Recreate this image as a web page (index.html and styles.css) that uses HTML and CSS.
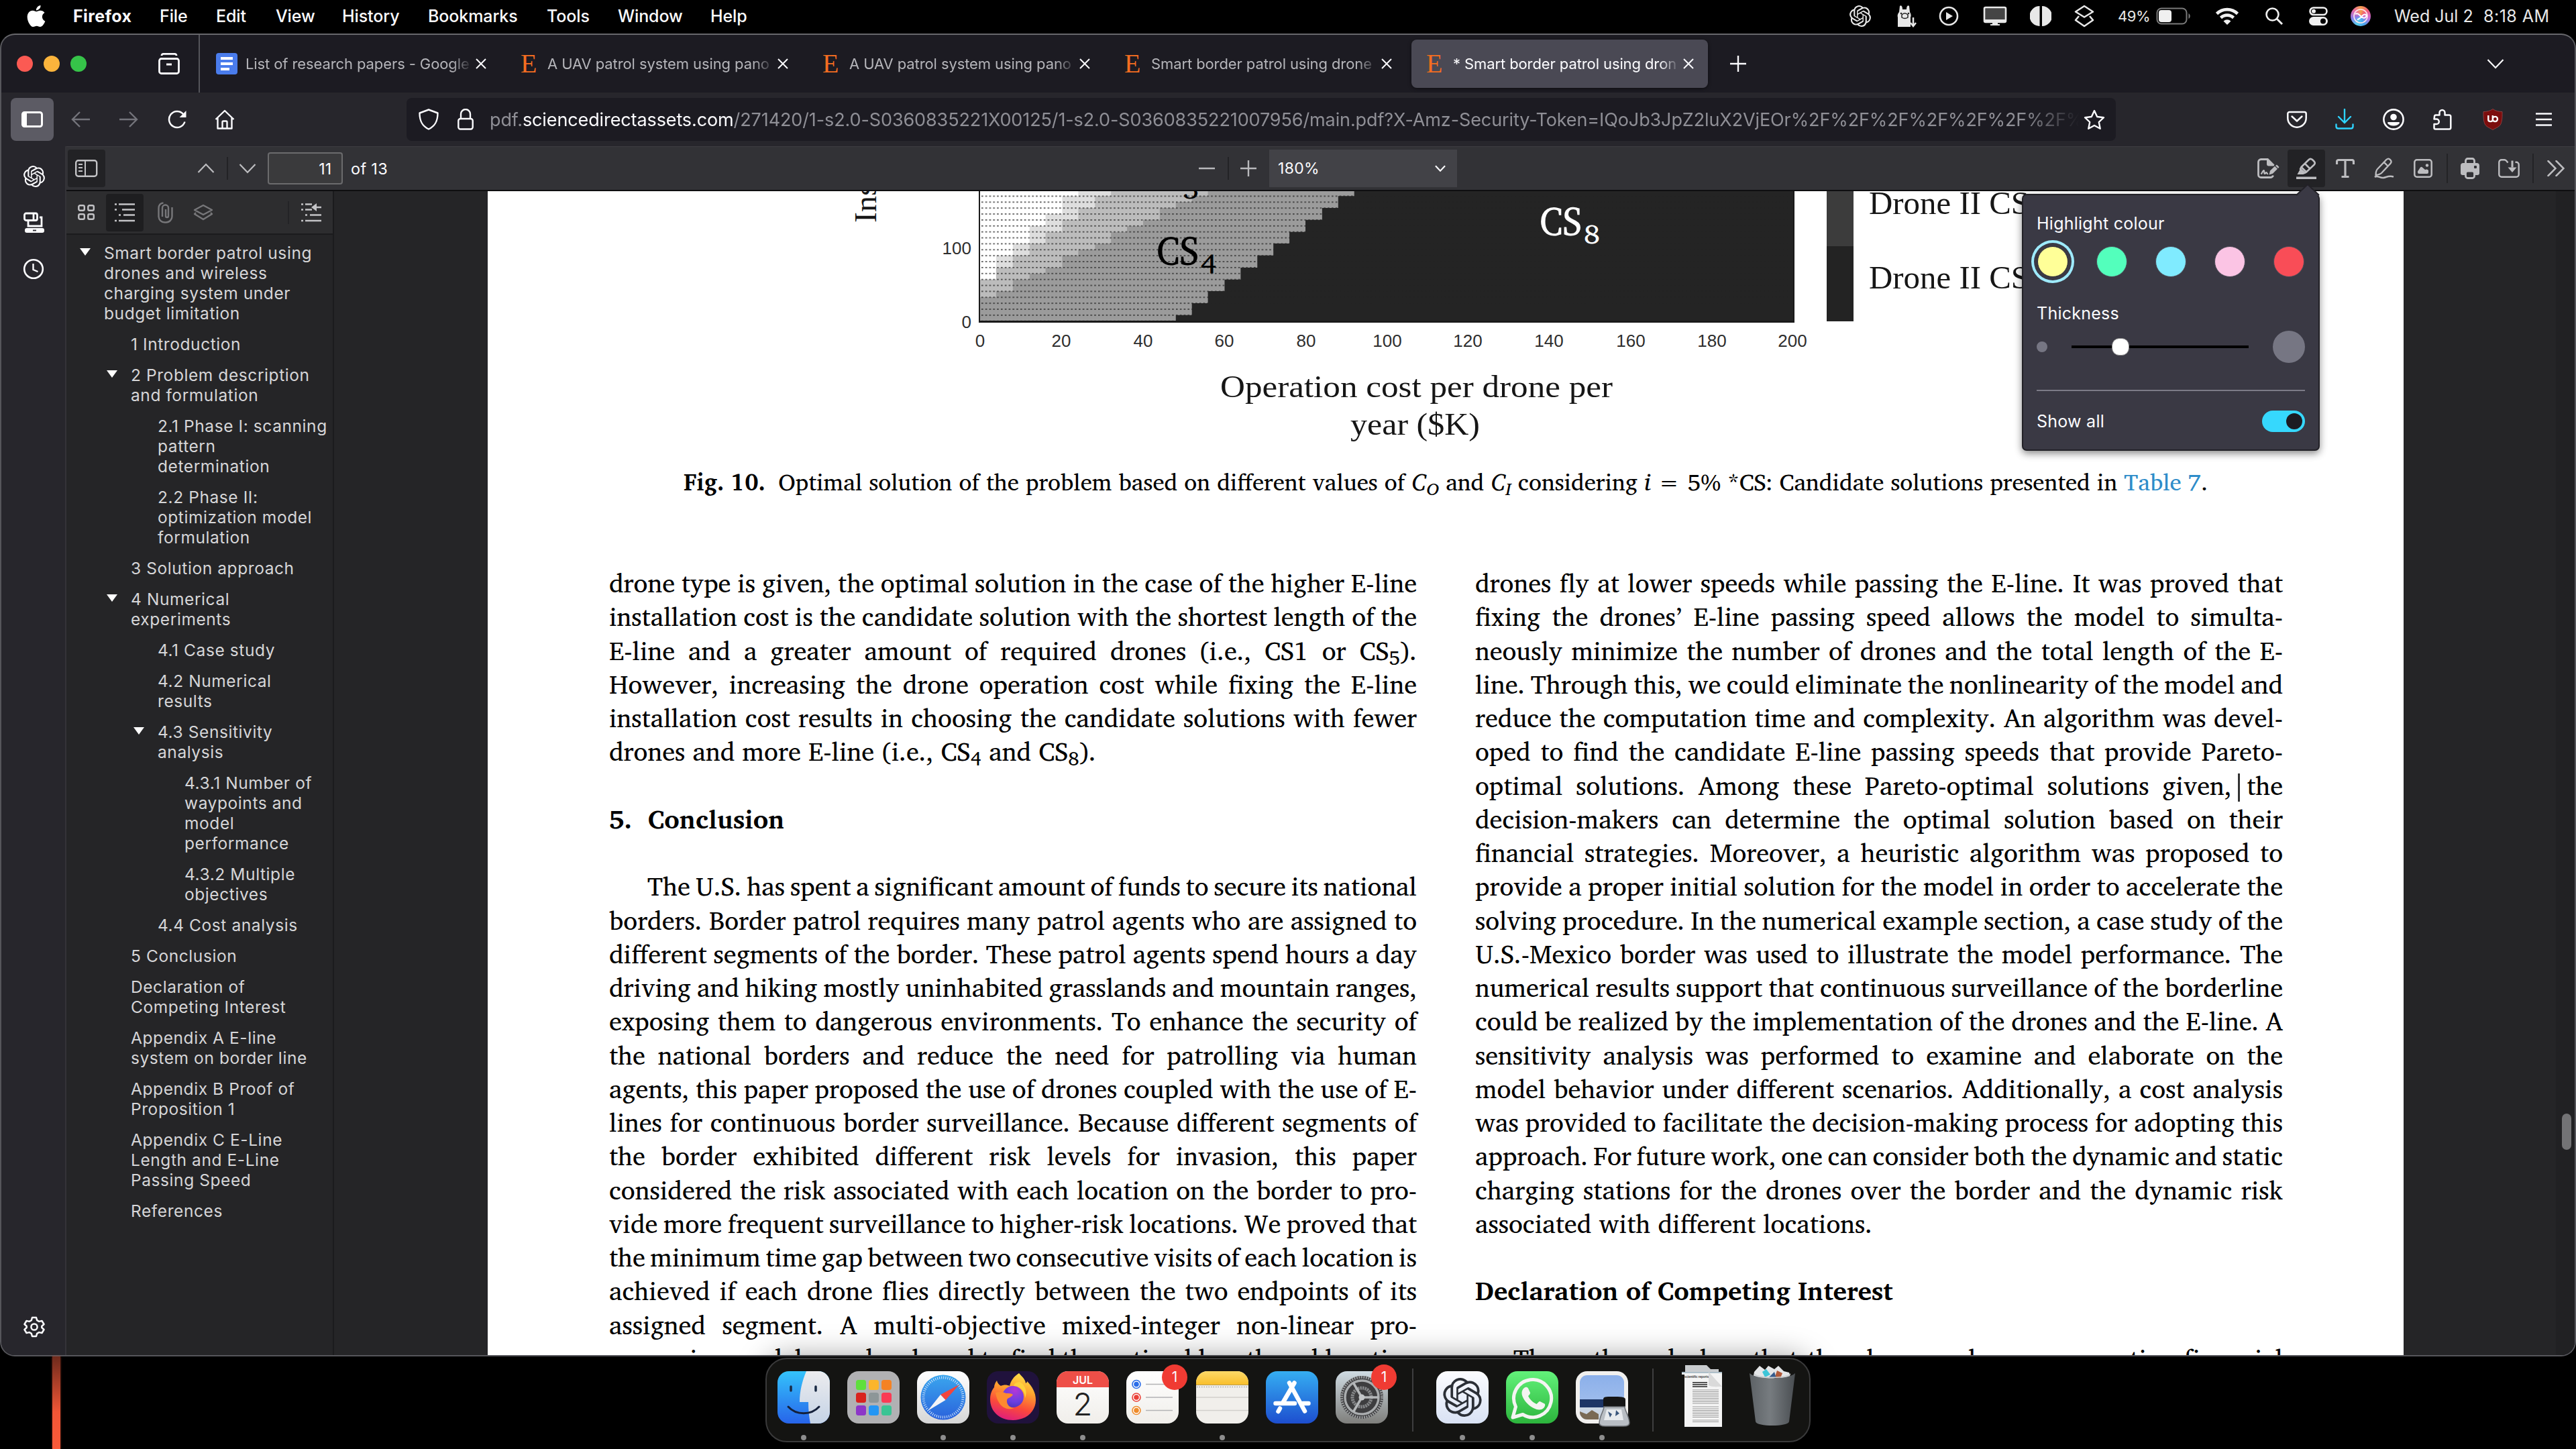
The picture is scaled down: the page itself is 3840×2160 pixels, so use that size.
FILE: index.html
```html
<!DOCTYPE html>
<html lang="en">
<head>
<meta charset="utf-8">
<title>Smart border patrol using drones</title>
<link rel="stylesheet" href="styles.css">
</head>
<body>
<svg class="defs" width="0" height="0" aria-hidden="true">
  <defs>
    <symbol id="knot" viewBox="0 0 24 24"><path fill="currentColor" d="M22.2819 9.8211a5.9847 5.9847 0 0 0-.5157-4.9108 6.0462 6.0462 0 0 0-6.5098-2.9A6.0651 6.0651 0 0 0 4.9807 4.1818a5.9847 5.9847 0 0 0-3.9977 2.9 6.0462 6.0462 0 0 0 .7427 7.0966 5.98 5.98 0 0 0 .511 4.9107 6.051 6.051 0 0 0 6.5146 2.9001A5.9847 5.9847 0 0 0 13.2599 24a6.0557 6.0557 0 0 0 5.7718-4.2058 5.9894 5.9894 0 0 0 3.9977-2.9001 6.0557 6.0557 0 0 0-.7475-7.0729zm-9.022 12.6081a4.4755 4.4755 0 0 1-2.8764-1.0408l.1419-.0804 4.7783-2.7582a.7948.7948 0 0 0 .3927-.6813v-6.7369l2.02 1.1686a.071.071 0 0 1 .038.052v5.5826a4.504 4.504 0 0 1-4.4945 4.4944zm-9.6607-4.1254a4.4708 4.4708 0 0 1-.5346-3.0137l.142.0852 4.783 2.7582a.7712.7712 0 0 0 .7806 0l5.8428-3.3685v2.3324a.0804.0804 0 0 1-.0332.0615L9.74 19.9502a4.4992 4.4992 0 0 1-6.1408-1.6464zM2.3408 7.8956a4.485 4.485 0 0 1 2.3655-1.9728V11.6a.7664.7664 0 0 0 .3879.6765l5.8144 3.3543-2.0201 1.1685a.0757.0757 0 0 1-.071 0l-4.8303-2.7865A4.504 4.504 0 0 1 2.3408 7.872zm16.5963 3.8558L13.1038 8.364 15.1192 7.2a.0757.0757 0 0 1 .071 0l4.8303 2.7913a4.4944 4.4944 0 0 1-.6765 8.1042v-5.6772a.79.79 0 0 0-.407-.667zm2.0107-3.0231l-.142-.0852-4.7735-2.7818a.7759.7759 0 0 0-.7854 0L9.409 9.2297V6.8974a.0662.0662 0 0 1 .0284-.0615l4.8303-2.7866a4.4992 4.4992 0 0 1 6.6802 4.66zM8.3065 12.863l-2.02-1.1638a.0804.0804 0 0 1-.038-.0567V6.0742a4.4992 4.4992 0 0 1 7.3757-3.4537l-.142.0805L8.704 5.459a.7948.7948 0 0 0-.3927.6813zm1.0976-2.3654l2.602-1.4998 2.6069 1.4998v2.9994l-2.5974 1.4997-2.6067-1.4997Z"/></symbol>
    <symbol id="close" viewBox="0 0 16 16"><path d="M1 1l14 14M15 1L1 15" fill="none" stroke="#fbfbfe" stroke-width="2"/></symbol>
    <symbol id="down" viewBox="0 0 26 16"><path d="M1.500 2l11.500 12L24.500 2" fill="none" stroke="currentColor" stroke-width="2.200"/></symbol>
    <linearGradient id="gBlue" x1="0" y1="0" x2="0" y2="1"><stop offset="0" stop-color="#34c3fb"/><stop offset="1" stop-color="#2764ea"/></linearGradient>
    <linearGradient id="gFace" x1="0" y1="0" x2="0" y2="1"><stop offset="0" stop-color="#ececee"/><stop offset="1" stop-color="#c5d3e6"/></linearGradient>
    <linearGradient id="gWhite" x1="0" y1="0" x2="0" y2="1"><stop offset="0" stop-color="#ffffff"/><stop offset="1" stop-color="#d6d6d6"/></linearGradient>
    <linearGradient id="gPaper" x1="0" y1="0" x2="0" y2="1"><stop offset="0" stop-color="#ffffff"/><stop offset="1" stop-color="#f0eeea"/></linearGradient>
    <linearGradient id="gSafari" x1="0" y1="0" x2="0" y2="1"><stop offset="0" stop-color="#3aa6ee"/><stop offset="1" stop-color="#2a62dc"/></linearGradient>
    <linearGradient id="gStore" x1="0" y1="0" x2="0" y2="1"><stop offset="0" stop-color="#35aef2"/><stop offset="1" stop-color="#1d4ecf"/></linearGradient>
    <linearGradient id="gGreen" x1="0" y1="0" x2="0" y2="1"><stop offset="0" stop-color="#62f27a"/><stop offset="1" stop-color="#2cb43c"/></linearGradient>
    <linearGradient id="gFox" x1=".7" y1="0" x2=".4" y2="1"><stop offset="0" stop-color="#ffe14a"/><stop offset=".35" stop-color="#ffa32e"/><stop offset=".7" stop-color="#fb4a3a"/><stop offset="1" stop-color="#e01f7a"/></linearGradient>
    <radialGradient id="gGlobe" cx=".6" cy=".2" r=".9"><stop offset="0" stop-color="#b537d6"/><stop offset=".6" stop-color="#6a3fe0"/><stop offset="1" stop-color="#4b32b4"/></radialGradient>
    <linearGradient id="gSys" x1="0" y1="0" x2="0" y2="1"><stop offset="0" stop-color="#cfdbe2"/><stop offset="1" stop-color="#7f7f7c"/></linearGradient>
    <linearGradient id="gNote" x1="0" y1="0" x2="0" y2="1"><stop offset="0" stop-color="#fcd968"/><stop offset="1" stop-color="#f9bf2c"/></linearGradient>
    <linearGradient id="gGpt" x1="0" y1="0" x2="0" y2="1"><stop offset="0" stop-color="#fbfcff"/><stop offset="1" stop-color="#d9e2f4"/></linearGradient>
    <linearGradient id="gBin" x1="0" y1="0" x2="1" y2="0"><stop offset="0" stop-color="#5d6266"/><stop offset=".45" stop-color="#777c80"/><stop offset="1" stop-color="#4a4e52"/></linearGradient>
    <linearGradient id="gSky" x1="0" y1="0" x2="0" y2="1"><stop offset="0" stop-color="#8cb0ea"/><stop offset="1" stop-color="#a9c4ee"/></linearGradient>
  </defs>
</svg>

<header class="menubar">
  <nav class="menus">
    <svg width="30" height="32" viewBox="1 0 22 24" preserveAspectRatio="none"><path fill="#fff" d="M12.152 6.896c-.948 0-2.415-1.078-3.960-1.040-2.040.027-3.910 1.183-4.961 3.014-2.117 3.675-.546 9.103 1.519 12.090 1.013 1.454 2.208 3.090 3.792 3.039 1.520-.065 2.090-.987 3.935-.987 1.831 0 2.350.987 3.960.948 1.637-.026 2.676-1.480 3.676-2.948 1.156-1.688 1.636-3.325 1.662-3.415-.039-.013-3.182-1.221-3.220-4.857-.026-3.040 2.480-4.494 2.597-4.559-1.429-2.090-3.623-2.324-4.390-2.376-2-.156-3.675 1.090-4.610 1.090zM15.530 3.830c.843-1.012 1.400-2.427 1.245-3.830-1.207.052-2.662.805-3.532 1.818-.780.896-1.454 2.338-1.273 3.714 1.338.104 2.715-.688 3.559-1.701"/></svg>
    <b>Firefox</b><span>File</span><span>Edit</span><span>View</span><span>History</span><span>Bookmarks</span><span>Tools</span><span>Window</span><span>Help</span>
  </nav>
  <div class="status">
    <svg width="32" height="32"><use href="#knot"/></svg>
    <svg width="32" height="34" viewBox="0 0 32 34"><path fill="#e8e8e8" d="M4 33V19c-1-3 0-6 2-8L7 2c2-2 4 0 4 5h6c0-5 2-7 4-5l1 9c2 3 2 6 1 8v14z"/><path d="M10 15c3-3 6-3 9 0v4c-3 2-6 2-9 0z" fill="none" stroke="#222" stroke-width="1.500"/><circle cx="9" cy="13" r="1.300" fill="#222"/><circle cx="20" cy="13" r="1.300" fill="#222"/><path d="M27 19v13M23 27l4 5 4-5" stroke="#e8e8e8" stroke-width="2.500" fill="none"/></svg>
    <svg width="32" height="32" viewBox="0 0 32 32"><circle cx="16" cy="16" r="13" fill="none" stroke="#e8e8e8" stroke-width="2.600"/><path d="M12 10l10 6-10 6z" fill="#e8e8e8"/></svg>
    <svg width="36" height="32" viewBox="0 0 36 32"><rect x="2" y="3" width="32" height="22" rx="2" fill="#454545" stroke="#e8e8e8" stroke-width="2.600"/><path d="M2 21h32v4H2zM14 25h8v3h3v2H11v-2h3z" fill="#e8e8e8"/></svg>
    <svg width="32" height="32" viewBox="0 0 32 32"><path fill="#e8e8e8" d="M14.500 1v30A15 15 0 0 1 14.500 1zM18 1a15 15 0 0 1 0 30z"/></svg>
    <svg width="32" height="34" viewBox="0 0 32 34"><path d="M16 2l13 8.500-13 8-13-8zM8 17l-5 6 13 9 13-9-5-6" fill="none" stroke="#e8e8e8" stroke-width="2.600" stroke-linejoin="round"/></svg>
    <span class="pct">49%</span>
    <svg width="54" height="26" viewBox="0 0 54 26"><rect x="1.500" y="1.500" width="44" height="23" rx="6.500" fill="none" stroke="#7a7a7a" stroke-width="2"/><rect x="4" y="4" width="19" height="18" rx="4" fill="#f0f0f0"/><path d="M48.500 9v8c3-1.500 3-6.500 0-8z" fill="#7a7a7a"/></svg>
    <svg width="36" height="28" viewBox="0 0 36 28"><g fill="none" stroke="#f0f0f0" stroke-width="4.600"><path d="M2.500 10.500a22 22 0 0 1 31 0"/><path d="M8.500 16.500a13.500 13.500 0 0 1 19 0"/></g><path d="M12.500 21.500a8 8 0 0 1 11 0L18 27z" fill="#f0f0f0"/></svg>
    <svg width="28" height="28" viewBox="0 0 28 28"><circle cx="11.500" cy="11.500" r="9" fill="none" stroke="#f0f0f0" stroke-width="2.600"/><path d="M18 18l8 8" stroke="#f0f0f0" stroke-width="3"/></svg>
    <svg width="28" height="28" viewBox="0 0 28 28"><rect x="1.500" y="1.500" width="25" height="10.500" rx="5.250" fill="none" stroke="#f0f0f0" stroke-width="2.600"/><circle cx="7" cy="6.700" r="3" fill="#f0f0f0"/><rect x="0" y="15" width="28" height="13" rx="6.500" fill="#f0f0f0"/><circle cx="21" cy="21.500" r="4" fill="#000"/></svg>
    <span class="siri"><svg width="24" height="24" viewBox="0 0 24 24"><circle cx="12" cy="12" r="10" fill="none" stroke="#ffe6ee" stroke-width="1.600"/><path d="M4 9c3-2 5 0 8 3s6 4 8 1-2-5-5-2-5 6-8 6" fill="none" stroke="#fff" stroke-width="2"/></svg></span>
    <span class="date">Wed Jul 2</span><span class="time">8:18 AM</span>
  </div>
</header>

<main class="window">
  <div class="tabbar">
    <div class="lights"><i></i><i></i><i></i></div>
    <svg class="firefox-view" width="32" height="32" viewBox="0 0 32 32"><g fill="none" stroke="#fbfbfe" stroke-width="2.800"><rect x="1.500" y="8.500" width="29" height="22" rx="3"/><path d="M5 4c0-2 1-2.600 2.500-2.600h17C26 1.400 27 2 27 4" /></g><rect x="12" y="15.500" width="8" height="3" fill="#fbfbfe"/></svg>
    <div class="tabs">
      <div class="tab"><svg width="32" height="32" viewBox="0 0 32 32"><rect width="32" height="32" rx="4" fill="#4a7cec"/><path d="M7 6h18v4H7zM7 14h18v4H7zM7 22h13v4H7z" fill="#fff"/></svg><span>List of research papers - Google</span><svg class="x" width="16" height="16"><use href="#close"/></svg></div>
      <div class="tab"><em>E</em><span>A UAV patrol system using pano</span><svg class="x" width="16" height="16"><use href="#close"/></svg></div>
      <div class="tab"><em>E</em><span>A UAV patrol system using pano</span><svg class="x" width="16" height="16"><use href="#close"/></svg></div>
      <div class="tab"><em>E</em><span>Smart border patrol using drone</span><svg class="x" width="16" height="16"><use href="#close"/></svg></div>
      <div class="tab active"><em>E</em><span>* Smart border patrol using dron</span><svg class="x" width="16" height="16"><use href="#close"/></svg></div>
    </div>
    <svg class="newtab" width="24" height="24" viewBox="0 0 24 24"><path d="M12 0v24M0 12h24" stroke="#fbfbfe" stroke-width="2.400"/></svg>
    <svg class="alltabs" width="26" height="16"><use href="#down"/></svg>
  </div>

  <div class="navbar">
    <div class="navleft">
      <span class="sidebtn"><svg width="32" height="24" viewBox="0 0 32 24"><rect x="1.500" y="1.500" width="29" height="21" rx="3" fill="none" stroke="#fff" stroke-width="3"/><path d="M3 2h5v20H3z" fill="#fff"/></svg></span>
      <svg class="dim" width="28" height="24" viewBox="0 0 28 24"><path d="M28 12H2M13 1L2 12l11 11" fill="none" stroke="currentColor" stroke-width="2.400"/></svg>
      <svg class="dim" width="28" height="24" viewBox="0 0 28 24"><path d="M0 12h26M15 1l11 11-11 11" fill="none" stroke="currentColor" stroke-width="2.400"/></svg>
      <svg width="28" height="28" viewBox="0 0 28 28"><path d="M25.500 17.500A12 12 0 1 1 23 6l2 3" fill="none" stroke="#fbfbfe" stroke-width="2.500"/><path d="M27.500 1v10H17.500z" fill="#fbfbfe"/></svg>
      <svg width="30" height="30" viewBox="0 0 30 30"><path d="M1.500 15L15 2l13.500 13M4.500 13v15.500h21V13M11.500 28V19c0-1 .5-1.500 1.500-1.500h4c1 0 1.500.5 1.500 1.500v9" fill="none" stroke="#fbfbfe" stroke-width="2.400" stroke-linejoin="round"/></svg>
    </div>
    <div class="urlbar">
      <svg width="30" height="32" viewBox="0 0 30 32"><path d="M15 1.500L28.500 6.500c0 11-3 19-13.500 24C4.500 25.500 1.500 17.500 1.500 6.500z" fill="none" stroke="#fbfbfe" stroke-width="2.400" stroke-linejoin="round"/></svg>
      <svg width="24" height="32" viewBox="0 0 24 32"><path d="M5 15V8a7 7 0 0 1 14 0v7" fill="none" stroke="#fbfbfe" stroke-width="2.400"/><rect x="1.300" y="15" width="21.400" height="15.500" rx="3" fill="none" stroke="#fbfbfe" stroke-width="2.400"/></svg>
      <div class="url"><span class="u1">pdf.</span><span class="u2">sciencedirectassets.com</span><span class="u3">/271420/1-s2.0-S0360835221X00125/1-s2.0-S0360835221007956/main.pdf?X-Amz-Security-Token=IQoJb3JpZ2luX2VjEOr%2F%2F%2F%2F%2F%2F%2F%2F</span></div>
      <svg width="32" height="31" viewBox="0 0 32 31"><path d="M16 2l4.200 9 9.800 1.200-7.200 6.800 1.900 9.800L16 24l-8.700 4.800 1.900-9.800L2 12.200 11.800 11z" fill="none" stroke="#fbfbfe" stroke-width="2.400" stroke-linejoin="round"/></svg>
    </div>
    <div class="navright">
      <svg width="32" height="32" viewBox="0 0 32 32"><path d="M5 5h22c1.500 0 2.700 1 2.700 2.500V14a13.700 13.700 0 0 1-27.400 0V7.500C2.300 6 3.500 5 5 5zM8.500 11.500l7.500 7 7.500-7" fill="none" stroke="#fbfbfe" stroke-width="2.500" stroke-linecap="round" stroke-linejoin="round"/></svg>
      <svg width="32" height="32" viewBox="0 0 32 32"><path d="M16 1v20M7 12l9 9 9-9M3.500 23.500v3c0 2 1 3 3 3h19c2 0 3-1 3-3v-3" fill="none" stroke="#2ed3ff" stroke-width="2.400" stroke-linecap="round"/></svg>
      <svg width="32" height="32" viewBox="0 0 32 32"><circle cx="16" cy="16" r="14.600" fill="none" stroke="#fbfbfe" stroke-width="2.600"/><circle cx="16" cy="12.500" r="4.800" fill="#fbfbfe"/><path d="M7 21.500c0-1 .6-1.500 1.500-1.500h15c1 0 1.500.5 1.500 1.500a10 7 0 0 1-18 0z" fill="#fbfbfe"/></svg>
      <svg width="32" height="32" viewBox="0 0 32 32"><path d="M4 12c0-1.500.6-2.500 2-2.500h5.500V6a4 4 0 0 1 8 0v3.500H26c1.500 0 2.300.8 2.300 2.300v16.500c0 1.500-.8 2.300-2.300 2.300H5.500c-1 0-2-.8-2-2v-5.500h3.500a3.800 3.800 0 0 0 0-7.600H3.500z" fill="none" stroke="#fbfbfe" stroke-width="2.500" stroke-linejoin="round"/></svg>
      <svg width="32" height="32" viewBox="0 0 32 32"><path d="M16 .5c4 3 9 4 14 4 .3 12-1 18-4 21-2.500 2.500-7 4-10 6-3-2-7.500-3.500-10-6-3-3-4.300-9-4-21 5 0 10-1 14-4z" fill="#7c0d0d" stroke="#9a4a4a" stroke-width=".8"/><path d="M9.300 10v6.500c0 3.500 6.500 3.500 6.500 0V10M15.800 15.500a3.600 3.600 0 1 0 7.200 0 3.600 3.600 0 0 0-7.200 0" fill="none" stroke="#fff" stroke-width="2.400"/></svg>
      <svg width="24" height="20" viewBox="0 0 24 20"><path d="M0 1.500h24M0 10h24M0 18.500h24" stroke="#fbfbfe" stroke-width="2.600"/></svg>
    </div>
  </div>

  <div class="body">
    <aside class="rail">
      <svg width="32" height="32"><use href="#knot"/></svg>
      <svg width="32" height="32" viewBox="0 0 32 32"><g fill="none" stroke="#fbfbfe" stroke-width="2.800"><rect x="1.500" y="2" width="19" height="10.500" rx="2.500"/><path d="M15 2v10M24 8h3v13H7v-7"/></g><rect x="2" y="24" width="29" height="7" rx="3" fill="#fbfbfe"/><path d="M14 27.500h5" stroke="#27262c" stroke-width="1.800"/></svg>
      <svg width="32" height="32" viewBox="0 0 32 32"><circle cx="16" cy="16" r="13.800" fill="none" stroke="#fbfbfe" stroke-width="2.600"/><path d="M15.500 8v9l7 3" fill="none" stroke="#fbfbfe" stroke-width="2.400"/></svg>
      <svg class="gear" width="32" height="32" viewBox="0 0 32 32"><path d="M13 2h6l1.200 4.200 3 1.700L27.500 7l3 5-3.200 3v2l3.200 3-3 5-4.300-.9-3 1.700L19 30h-6l-1.200-4.200-3-1.700-4.300.9-3-5 3.200-3v-2l-3.200-3 3-5 4.300.9 3-1.700z" fill="none" stroke="#fbfbfe" stroke-width="2.500" stroke-linejoin="round"/><circle cx="16" cy="16" r="4.600" fill="none" stroke="#fbfbfe" stroke-width="2.500"/></svg>
    </aside>

    <section class="viewer">
      <div class="pdfbar">
        <div class="pdfleft">
          <span class="pbtn on"><svg width="34" height="26" viewBox="0 0 34 26"><rect x="1.200" y="1.200" width="31" height="23.500" rx="3.500" fill="none" stroke="#c3c3c6" stroke-width="2.400"/><path d="M15 1v24M5 7h6M5 12h6M5 17h6" stroke="#c3c3c6" stroke-width="2"/></svg></span>
          <svg class="up" width="26" height="16"><use href="#down"/></svg>
          <i class="vsep"></i>
          <svg width="26" height="16"><use href="#down"/></svg>
          <span class="pagebox">11</span>
          <span class="pagecount">of 13</span>
        </div>
        <div class="pdfmid">
          <svg width="24" height="24" viewBox="0 0 24 24"><path d="M0 12h24" stroke="#b9b9bc" stroke-width="2.400"/></svg>
          <i class="vsep"></i>
          <svg width="24" height="24" viewBox="0 0 24 24"><path d="M0 12h24M12 0v24" stroke="#b9b9bc" stroke-width="2.400"/></svg>
          <span class="zoom"><span>180%</span><svg width="16" height="10" viewBox="0 0 26 16"><path d="M1.500 2l11.500 12L24.500 2" fill="none" stroke="#fbfbfe" stroke-width="3.500"/></svg></span>
        </div>
        <div class="pdfright">
          <svg width="34" height="32" viewBox="0 0 34 32"><path d="M15 2.500H6.500A4 4 0 0 0 2.500 6.500v19a4 4 0 0 0 4 4H21a4 4 0 0 0 3.500-3" fill="none" stroke="#bdbdc0" stroke-width="2.800"/><path d="M15 1h2l9.500 9.500-1 2H18a3 3 0 0 1-3-3z" fill="#bdbdc0"/><path d="M6.500 24.500c2-2 2.500-5 4-5.500 1.500 0 0 5 1.500 5 1 0 1.500-2 2.500-2s0 2.500 2.500 2" fill="none" stroke="#bdbdc0" stroke-width="2.200"/><path d="M18.500 25.500l1.500-6 7-6.800 4 4-7 7zM28 12l2-1.500 3.500 3.500-1.500 2z" fill="#bdbdc0"/></svg>
          <span class="pbtn on"><svg width="32" height="32" viewBox="0 0 32 32"><path d="M20 2.800c2-1.600 3.500-1.200 5 .2l2.500 2.500c1.500 1.500 1.800 3 .2 5L16 21.500l-3 1.500-6-6 1.500-3zM14 9l8 8M9.500 15l6 6" fill="none" stroke="#bdbdc0" stroke-width="2.600" stroke-linejoin="round"/><path d="M2.500 25l5-9 8 6.500-4 2.500zM1 28.500h30v4H1z" fill="#bdbdc0"/></svg></span>
          <svg width="28" height="28" viewBox="0 0 28 28"><path d="M1.500 8V4a2.500 2.500 0 0 1 2.500-2.500h20A2.500 2.500 0 0 1 26.500 4v4M14 1.500v25M8.500 26.500h11" fill="none" stroke="#bdbdc0" stroke-width="3.200"/></svg>
          <svg width="30" height="32" viewBox="0 0 30 32"><path d="M18.500 2.800c2-1.800 3.500-1.500 5-.2l1 1c1.500 1.500 1.500 3 0 5L11 23c-2 2-5 2.500-8.500 3C2.500 22 3 19 5 17zM15 7l6 6" fill="none" stroke="#bdbdc0" stroke-width="2.300" stroke-linejoin="round"/><path d="M1 29c4-3.500 8 2 13 1s8-3.500 15-1.500" fill="none" stroke="#bdbdc0" stroke-width="2.500"/></svg>
          <svg width="28" height="28" viewBox="0 0 28 28"><rect x="1.300" y="1.300" width="25.400" height="25.400" rx="3.500" fill="none" stroke="#bdbdc0" stroke-width="2.500"/><path d="M6 18.500l4-6c1-1 2-1 3 0l4 3.500c2-1 4-.5 5 1v3a2 2 0 0 1-2 2H8a2 2 0 0 1-2-2z" fill="#bdbdc0"/><circle cx="20" cy="9.500" r="2.200" fill="#bdbdc0"/></svg>
          <i class="vsep tall"></i>
          <svg width="28" height="32" viewBox="0 0 28 32"><rect x="7.500" y="1.500" width="13" height="12" rx="3" fill="none" stroke="#bdbdc0" stroke-width="2.800"/><path d="M4 8h20a4 4 0 0 1 4 4v11a3 3 0 0 1-3 3H3a3 3 0 0 1-3-3V12a4 4 0 0 1 4-4z" fill="#bdbdc0"/><rect x="7.500" y="20" width="13" height="10.500" rx="3" fill="#323236" stroke="#bdbdc0" stroke-width="2.800"/><rect x="20" y="12" width="4" height="4" rx="1" fill="#323236"/></svg>
          <svg width="32" height="28" viewBox="0 0 32 28"><path d="M14.500 5.500L12 2.500c-1-1-1.500-1.200-2.500-1.200H5A3.700 3.700 0 0 0 1.300 5v18A3.700 3.700 0 0 0 5 26.700h22a3.700 3.700 0 0 0 3.700-3.700V8.500A3.700 3.700 0 0 0 27 4.800h-1.500" fill="none" stroke="#bdbdc0" stroke-width="2.400"/><path d="M21 2.500v10" stroke="#bdbdc0" stroke-width="3"/><path d="M14.500 12.500h13l-6.500 7.500z" fill="#bdbdc0"/></svg>
          <i class="vsep tall"></i>
          <svg width="26" height="24" viewBox="0 0 26 24"><path d="M1.500 1l11 11-11 11M13.500 1l11 11-11 11" fill="none" stroke="#bdbdc0" stroke-width="2.500" stroke-linecap="round"/></svg>
        </div>
      </div>

      <div class="content">
        <aside class="outline">
          <div class="outbar">
            <svg width="26" height="24" viewBox="0 0 26 24"><g fill="none" stroke="#c3c3c6" stroke-width="2.400"><rect x="1.300" y="1.300" width="8.500" height="7.500" rx="2"/><rect x="15.300" y="1.300" width="8.500" height="7.500" rx="2"/><rect x="1.300" y="14.300" width="8.500" height="7.500" rx="2"/><rect x="15.300" y="14.300" width="8.500" height="7.500" rx="2"/></g></svg>
            <span class="pbtn dark"><svg width="32" height="28" viewBox="0 0 32 28"><path d="M1 1.500h3M7 1.500h24M1 9.500h3M12 9.500h19M7 17.500h3M14 17.500h17M1 26h3M7 26h24" stroke="#c3c3c6" stroke-width="2.300"/></svg></span>
            <svg width="24" height="32" viewBox="0 0 24 32"><path d="M7 22V9a4.500 4.500 0 0 1 9 0v12a2 2 0 0 1-4 0V11M21.500 8v13a9 9 0 0 1-9 9.500h-2A9 9 0 0 1 1.500 22V9.500c0-5 3-8 7-8" fill="none" stroke="#77777a" stroke-width="2.400"/></svg>
            <svg width="30" height="26" viewBox="0 0 30 26"><path d="M15 2l13 7-13 7L2 9zM4 13l-2 2 13 8 13-8-2-2" fill="none" stroke="#77777a" stroke-width="2.400" stroke-linejoin="round"/></svg>
            <i class="vsep"></i>
            <svg width="32" height="28" viewBox="0 0 32 28"><path d="M1 1.500h3M7 1.500h10M1 9.500h3M7 9.500h10M19 6h12M7 17.500h3M14 17.500h17M1 26h3M7 26h24" stroke="#c3c3c6" stroke-width="2.300"/><path d="M24 0v12l-8-6z" fill="#c3c3c6"/></svg>
          </div>
          <ul class="tree">
            <li class="l0 open"><span>Smart border patrol using<br>drones and wireless<br>charging system under<br>budget limitation</span></li>
            <li class="l1"><span>1 Introduction</span></li>
            <li class="l1 open"><span>2 Problem description<br>and formulation</span></li>
            <li class="l2"><span>2.1 Phase I: scanning<br>pattern<br>determination</span></li>
            <li class="l2"><span>2.2 Phase II:<br>optimization model<br>formulation</span></li>
            <li class="l1"><span>3 Solution approach</span></li>
            <li class="l1 open"><span>4 Numerical<br>experiments</span></li>
            <li class="l2"><span>4.1 Case study</span></li>
            <li class="l2"><span>4.2 Numerical<br>results</span></li>
            <li class="l2 open"><span>4.3 Sensitivity<br>analysis</span></li>
            <li class="l3"><span>4.3.1 Number of<br>waypoints and<br>model<br>performance</span></li>
            <li class="l3"><span>4.3.2 Multiple<br>objectives</span></li>
            <li class="l2"><span>4.4 Cost analysis</span></li>
            <li class="l1"><span>5 Conclusion</span></li>
            <li class="l1"><span>Declaration of<br>Competing Interest</span></li>
            <li class="l1"><span>Appendix A E-line<br>system on border line</span></li>
            <li class="l1"><span>Appendix B Proof of<br>Proposition 1</span></li>
            <li class="l1"><span>Appendix C E-Line<br>Length and E-Line<br>Passing Speed</span></li>
            <li class="l1"><span>References</span></li>
          </ul>
        </aside>

        <article class="page">
          <svg class="figure" width="2856" height="380" viewBox="727 285 2856 380">
            <defs>
              <pattern id="dots" x="1463" y="291.500" width="5.800" height="8.870" patternUnits="userSpaceOnUse"><rect width="2.600" height="1.800" fill="#222" opacity=".75"/></pattern>
            </defs>
            <g transform="translate(1240 270) scale(.95667 .33333)">
              <path fill="#dedede" d="M384 45V67H359V146H333V200H308V279H282V332H256V440H231V630H1499V45Z"/>
              <path fill="#bcbcbc" d="M435 45V67H410V120H384V173H359V227H333V279H308V332H282V387H256V440H231V630H1499V45Z"/>
              <path fill="#9b9b9b" d="M586 45V67H561V93H536V120H511V173H485V200H460V227H435V279H410V306H384V332H359V387H333V413H308V440H282V492H256V519H231V630H1499V45Z"/>
              <path fill="#242424" d="M814 45V67H789V120H764V173H738V227H713V279H688V332H663V387H637V440H612V492H586V546H561V599H536V630H1499V45Z"/>
            </g>
            <rect x="1460" y="285" width="1214" height="194" fill="url(#dots)"/>
            <path d="M1460 285V480H2674V285" fill="none" stroke="#1a1a1a" stroke-width="2"/>
            <path d="M1459 479.500H2675" stroke="#1a1a1a" stroke-width="3"/>
            <g font-family="Liberation Sans, Arial, sans-serif" font-size="26" fill="#2e2e2e">
              <text x="1448" y="379" text-anchor="end">100</text><text x="1448" y="489" text-anchor="end">0</text>
              <g text-anchor="middle"><text x="1461" y="517">0</text><text x="1582" y="517">20</text><text x="1704" y="517">40</text><text x="1825" y="517">60</text><text x="1947" y="517">80</text><text x="2068" y="517">100</text><text x="2188" y="517">120</text><text x="2309" y="517">140</text><text x="2431" y="517">160</text><text x="2552" y="517">180</text><text x="2672" y="517">200</text></g>
            </g>
            <g font-family="Liberation Serif, Times New Roman, serif" fill="#161616">
              <text x="1819" y="592" font-size="47" textLength="585" lengthAdjust="spacingAndGlyphs">Operation cost per drone per</text>
              <text x="2013" y="648" font-size="47" textLength="193" lengthAdjust="spacingAndGlyphs">year ($K)</text>
              <text transform="translate(1306 332) rotate(-90)" font-size="46" textLength="72" lengthAdjust="spacingAndGlyphs">Inst</text>
              <text x="2786" y="319" font-size="48" textLength="239" lengthAdjust="spacingAndGlyphs">Drone II CS</text>
              <text x="2786" y="430" font-size="48" textLength="239" lengthAdjust="spacingAndGlyphs">Drone II CS</text>
            </g>
            <g class="zone"><text x="1724" y="395" font-size="60" textLength="63" lengthAdjust="spacingAndGlyphs">CS</text><text x="1789" y="407" font-size="41" textLength="25" lengthAdjust="spacingAndGlyphs">4</text><text x="1763" y="296" font-size="41" textLength="24" lengthAdjust="spacingAndGlyphs">3</text></g>
            <g class="zone light"><text x="2295" y="351" font-size="60" textLength="63" lengthAdjust="spacingAndGlyphs">CS</text><text x="2361" y="363" font-size="41" textLength="24" lengthAdjust="spacingAndGlyphs">8</text></g>
            <rect x="2723" y="285" width="40" height="82" fill="#3c3c3c"/><rect x="2723" y="367" width="40" height="112" fill="#232323"/>
          </svg>
          <p class="caption"><b>Fig. 10.</b><span>Optimal solution of the problem based on different values of <i>C<sub>O</sub></i> and <i>C<sub>I</sub></i> considering <i>i</i> = 5% *CS: Candidate solutions presented in <a>Table 7</a>.</span></p>
          <div class="cols">
            <div class="col">
              <p>drone type is given, the optimal solution in the case of the higher E-line</p>
              <p>installation cost is the candidate solution with the shortest length of the</p>
              <p>E-line and a greater amount of required drones (i.e., CS1 or CS<sub>5</sub>).</p>
              <p>However, increasing the drone operation cost while fixing the E-line</p>
              <p>installation cost results in choosing the candidate solutions with fewer</p>
              <p class="end">drones and more E-line (i.e., CS<sub>4</sub> and CS<sub>8</sub>).</p>
              <h2><span>5.</span>Conclusion</h2>
              <p class="indent">The U.S. has spent a significant amount of funds to secure its national</p>
              <p>borders. Border patrol requires many patrol agents who are assigned to</p>
              <p>different segments of the border. These patrol agents spend hours a day</p>
              <p>driving and hiking mostly uninhabited grasslands and mountain ranges,</p>
              <p>exposing them to dangerous environments. To enhance the security of</p>
              <p>the national borders and reduce the need for patrolling via human</p>
              <p>agents, this paper proposed the use of drones coupled with the use of E-</p>
              <p>lines for continuous border surveillance. Because different segments of</p>
              <p>the border exhibited different risk levels for invasion, this paper</p>
              <p>considered the risk associated with each location on the border to pro-</p>
              <p>vide more frequent surveillance to higher-risk locations. We proved that</p>
              <p>the minimum time gap between two consecutive visits of each location is</p>
              <p>achieved if each drone flies directly between the two endpoints of its</p>
              <p>assigned segment. A multi-objective mixed-integer non-linear pro-</p>
              <p>gramming model was developed to find the optimal length and location</p>
            </div>
            <div class="col">
              <p>drones fly at lower speeds while passing the E-line. It was proved that</p>
              <p>fixing the drones’ E-line passing speed allows the model to simulta-</p>
              <p>neously minimize the number of drones and the total length of the E-</p>
              <p>line. Through this, we could eliminate the nonlinearity of the model and</p>
              <p>reduce the computation time and complexity. An algorithm was devel-</p>
              <p>oped to find the candidate E-line passing speeds that provide Pareto-</p>
              <p>optimal solutions. Among these Pareto-optimal solutions given,<i class="ibeam"></i> the</p>
              <p>decision-makers can determine the optimal solution based on their</p>
              <p>financial strategies. Moreover, a heuristic algorithm was proposed to</p>
              <p>provide a proper initial solution for the model in order to accelerate the</p>
              <p>solving procedure. In the numerical example section, a case study of the</p>
              <p>U.S.-Mexico border was used to illustrate the model performance. The</p>
              <p>numerical results support that continuous surveillance of the borderline</p>
              <p>could be realized by the implementation of the drones and the E-line. A</p>
              <p>sensitivity analysis was performed to examine and elaborate on the</p>
              <p>model behavior under different scenarios. Additionally, a cost analysis</p>
              <p>was provided to facilitate the decision-making process for adopting this</p>
              <p>approach. For future work, one can consider both the dynamic and static</p>
              <p>charging stations for the drones over the border and the dynamic risk</p>
              <p class="end">associated with different locations.</p>
              <h2>Declaration of Competing Interest</h2>
              <p class="indent">The authors declare that they have no known competing financial</p>
            </div>
          </div>
        </article>
        <div class="scroll"><i></i></div>
      </div>
    </section>
  </div>

  <div class="popup">
    <svg class="tip" width="36" height="18" viewBox="0 0 36 18"><path d="M1 18L18 1l17 17z" fill="#3a3944"/><path d="M1 17L18 1l17 16" fill="none" stroke="#222127" stroke-width="2"/></svg>
    <h3>Highlight colour</h3>
    <div class="swatches"><i class="sel c1"></i><i class="c2"></i><i class="c3"></i><i class="c4"></i><i class="c5"></i></div>
    <h3>Thickness</h3>
    <div class="slider"><i class="small"></i><span class="track"><i class="thumb"></i></span><i class="big"></i></div>
    <hr>
    <div class="showall"><h3>Show all</h3><span class="toggle"><i></i></span></div>
  </div>
</main>

<footer class="desktop">
  <i class="beam"></i>
  <div class="dock">
    <div class="app run"><svg width="78" height="78" viewBox="0 0 78 78"><rect width="78" height="78" rx="17" fill="url(#gBlue)"/><path d="M43 0h18a17 17 0 0 1 17 17v44a17 17 0 0 1-17 17H49c-2-10-3-20-3-32H33C33 30 37 14 43 0z" fill="url(#gFace)"/><path d="M20 23v6M57 23v6" stroke="#1a2a44" stroke-width="3.500" stroke-linecap="round"/><path d="M16 53c12 13 34 13 46 0" fill="none" stroke="#14203a" stroke-width="3" stroke-linecap="round"/></svg></div>
    <div class="app"><svg width="78" height="78" viewBox="0 0 78 78"><rect width="78" height="78" rx="17" fill="#b1b1b3"/><g><rect x="13" y="13" width="15" height="15" rx="3.500" fill="#5fe03c"/><rect x="32" y="13" width="15" height="15" rx="3.500" fill="#fbb52c"/><rect x="51" y="13" width="15" height="15" rx="3.500" fill="#f58224"/><rect x="13" y="32" width="15" height="15" rx="3.500" fill="#d8231e"/><rect x="32" y="32" width="15" height="15" rx="3.500" fill="#8d9698"/><rect x="51" y="32" width="15" height="15" rx="3.500" fill="#fb3b55"/><rect x="13" y="51" width="15" height="15" rx="3.500" fill="#8d36c8"/><rect x="32" y="51" width="15" height="15" rx="3.500" fill="#2496f4"/><rect x="51" y="51" width="15" height="15" rx="3.500" fill="#3bc494"/></g></svg></div>
    <div class="app run"><svg width="78" height="78" viewBox="0 0 78 78"><rect width="78" height="78" rx="17" fill="url(#gWhite)"/><circle cx="39" cy="39" r="33.500" fill="url(#gSafari)"/><circle cx="39" cy="39" r="29.500" fill="none" stroke="#d5e8fb" stroke-width="4" stroke-dasharray="1 2.090"/><path d="M63 20L42.500 43 35 35z" fill="#f3453c"/><path d="M16 59l19-24 7.500 8z" fill="#f4f4f6"/></svg></div>
    <div class="app run"><svg width="78" height="78" viewBox="0 0 78 78"><rect width="78" height="78" rx="17" fill="#20123c"/><path d="M48 3c5 6 9 8 10 15 2-1 2-2 2-3 8 8 13 17 13 28 0 17-14 30-34 30S5 60 5 42c0-9 3-14 6-18 0-3 1-6 4-10 1 4 3 6 6 8 4-2 9-2 13 0C36 14 40 8 48 3z" fill="url(#gFox)"/><circle cx="39" cy="38" r="16" fill="url(#gGlobe)"/><path d="M13 32c6-2 12-1 16 1 4 0 8 0 10 2-3 5-8 4-9 8-1 7 5 12 11 12-10 4-24 0-28-23z" fill="#fd8a30"/><path d="M40 22c9 0 17 7 17 18 4-10 0-20-8-24-4 0-8 2-9 6z" fill="#ffd13e"/></svg></div>
    <div class="app run"><svg width="78" height="78" viewBox="0 0 78 78"><rect width="78" height="78" rx="17" fill="url(#gPaper)"/><path d="M0 24V17A17 17 0 0 1 17 0h44a17 17 0 0 1 17 17v7z" fill="#ee4f48"/><text x="39" y="19" text-anchor="middle" font-family="Inter, sans-serif" font-weight="600" font-size="16" fill="#fff">JUL</text><text x="39" y="66" text-anchor="middle" font-family="Inter, sans-serif" font-weight="300" font-size="47" fill="#222">2</text></svg></div>
    <div class="app"><svg width="78" height="78" viewBox="0 0 78 78"><rect width="78" height="78" rx="17" fill="url(#gPaper)"/><path d="M29 19.500h40M29 39h40M29 58.500h40" stroke="#b3b3b5" stroke-width="1.400"/><g fill="#fff" stroke-width="1.600"><circle cx="15" cy="19.500" r="6" stroke="#2b6de8"/><circle cx="15" cy="39" r="6" stroke="#ea4038"/><circle cx="15" cy="58.500" r="6" stroke="#ee8b2c"/></g><circle cx="15" cy="19.500" r="3.800" fill="#2b6de8"/><circle cx="15" cy="39" r="3.800" fill="#ea4038"/><circle cx="15" cy="58.500" r="3.800" fill="#ee8b2c"/></svg><b class="badge">1</b></div>
    <div class="app run"><svg width="78" height="78" viewBox="0 0 78 78"><rect width="78" height="78" rx="17" fill="#f1efeb"/><path d="M0 20V17A17 17 0 0 1 17 0h44a17 17 0 0 1 17 17v3z" fill="url(#gNote)"/><path d="M0 20.500h78" stroke="#b79a50" stroke-width="1"/><path d="M1 23.500h76" stroke="#a6a6a6" stroke-width="1.600" stroke-dasharray="1.500 2"/><path d="M0 39h78M0 58.500h78" stroke="#d2d0cc" stroke-width="1.500"/></svg></div>
    <div class="app"><svg width="78" height="78" viewBox="0 0 78 78"><rect width="78" height="78" rx="17" fill="url(#gStore)"/><g stroke="#fff" stroke-width="6.500" stroke-linecap="round"><path d="M42.500 17.500L25 47.500M35 17.500l23 42M14.500 48H43M55 48h8.500M21 55.500l-2.500 4.500"/></g></svg></div>
    <div class="app"><svg width="78" height="78" viewBox="0 0 78 78"><rect width="78" height="78" rx="17" fill="url(#gSys)"/><circle cx="39" cy="39" r="32" fill="#3d3d3f"/><circle cx="39" cy="39" r="30" fill="none" stroke="#9a9c9e" stroke-width="4" stroke-dasharray="2 1.500"/><circle cx="39" cy="39" r="25" fill="none" stroke="#a9acae" stroke-width="3.500"/><circle cx="39" cy="39" r="14" fill="none" stroke="#858789" stroke-width="5" stroke-dasharray="2.500 1"/><path d="M39 39h25M39 39L26.500 17.500M39 39L26.500 60.500" stroke="#b5b8ba" stroke-width="3.500"/><circle cx="39" cy="39" r="4.500" fill="#c3c6c8"/></svg><b class="badge">1</b></div>
    <i class="dsep"></i>
    <div class="app run"><svg width="78" height="78" viewBox="0 0 78 78"><rect width="78" height="78" rx="17" fill="url(#gGpt)"/><svg x="10" y="10" width="58" height="58" color="#2b2f36"><use href="#knot"/></svg></svg></div>
    <div class="app run"><svg width="78" height="78" viewBox="0 0 78 78"><rect width="78" height="78" rx="17" fill="url(#gGreen)"/><path d="M10 69l4.500-16A28 28 0 1 1 25 64.500z" fill="none" stroke="#f4f4f2" stroke-width="5" stroke-linejoin="round"/><path d="M27 25c2-2 5-1.500 6 .5l3 6.500c.5 1.500-2 4-3 5 3 6 7 9.500 12.500 12 1.500-1 3.500-4.500 5-4l7 3.500c1.500 1 .5 5-1.500 6.500-4 3.500-9 3-14 .5-8-4-14-10-17.500-18-2-5-1-9.500 2.500-12.500z" fill="#f4f4f2"/></svg></div>
    <div class="app run"><svg width="84" height="84" viewBox="0 0 84 84"><rect width="78" height="78" rx="17" fill="#f1f0ee"/><clipPath id="ph"><rect x="6" y="6" width="66" height="66" rx="11"/></clipPath><g clip-path="url(#ph)"><rect x="6" y="6" width="66" height="66" fill="url(#gSky)"/><rect x="6" y="42" width="66" height="16" fill="#1d3566"/><rect x="6" y="54" width="66" height="20" fill="#cbd6e4"/><path d="M6 60l10 4 8-6 10 6v8H6z" fill="#7a6a55"/></g><path d="M41 42c0-4 3-4 14-4s19 0 19 4v11H41z" fill="#151515"/><path d="M42 53h31c0 6 6 12 7 24 0 4-3 5-9 5H44c-6 0-9-1-9-5 1-12 7-18 7-24z" fill="#b9bec4" stroke="#6b6f74" stroke-width="1.500"/><path d="M46 57h22l3 16H42z" fill="#e8ebee"/><path d="M48 60l6 4-3 5zM60 58l5 5-6 4z" fill="#3a567c"/></svg></div>
    <i class="dsep"></i>
    <svg class="files" width="62" height="92" viewBox="0 0 62 92"><path d="M5 0h32l6 6h12v86H5z" fill="#c9cccf"/><path d="M0 10h60v82H4V14H0z" fill="#f4f4f4"/><path d="M0 10h60v2H0z" fill="#aebfc9"/><text x="4" y="19" font-family="Liberation Sans" font-weight="700" font-size="4.500" fill="#333">scientific reports</text><path d="M16 26h22M16 29h22M16 32h22" stroke="#222" stroke-width="1.500"/><g stroke="#9a9a9a" stroke-width="1"><path d="M16 37h39M16 39.500h39M16 42h39M16 44.500h39M16 47h39M16 49.500h39M16 52h39M16 54.500h39M16 57h39M16 62h39M16 65h39M16 67.500h39M16 70h39M16 72.500h39M16 75h39M16 77.500h39M16 82h39M16 84.500h39"/></g><path d="M40 10l20 22c-8 0-16 1-20-2z" fill="#dadada"/></svg>
    <svg class="trash" width="70" height="92" viewBox="0 0 70 92"><path d="M8 10l8-9 8 6 5-6 9 5 6-5 8 8 8 2 3 10H6z" fill="#e4e6e8"/><path d="M20 10l6-4 6 8-8 4z" fill="#3dc5d8"/><path d="M42 8l8 4-4 10-8-2z" fill="#b05a3a"/><path d="M30 18l8-8 3 10z" fill="#355a8c"/><path d="M1 12c10 10 58 10 68 0l-9 72c-1 8-49 8-50 0z" fill="url(#gBin)"/><path d="M8 13c6 7 48 7 54 0" fill="none" stroke="#c9ccce" stroke-width="1.500"/></svg>
  </div>
</footer>
</body>
</html>
```
FILE: styles.css
```css
* { box-sizing: border-box; }
html, body { margin: 0; width: 3840px; height: 2160px; overflow: hidden; background: #000; }
body { display: flex; flex-direction: column; font-family: Inter, "Liberation Sans", sans-serif; color: #fbfbfe; }
svg { display: block; flex: none; }
p, h2, h3, ul { margin: 0; padding: 0; }
i { font-style: normal; flex: none; }
.defs { position: absolute; }

/* system menu bar */
.menubar { display: flex; justify-content: space-between; height: 50px; align-items: center; padding-left: 39px; font-size: 25px; font-weight: 500; line-height: 46px; white-space: nowrap; padding-bottom: 3px; }
.menus { display: grid; grid-template-columns: 70px 129px 84px 89px 99px 128px 177px 106px 138px 80px; align-items: center; letter-spacing: -.1px; }
.menus b { font-weight: 700; letter-spacing: .4px; }
.status { display: grid; grid-template-columns: 68px 64px 67px 70px 65px 66px 57px 88px 74px 66px 62px 65px 133px 138px; align-items: center; color: #e8e8e8; font-weight: 400; }
.pct { font-size: 22px; letter-spacing: -.4px; }
.time { letter-spacing: .5px; }
.siri { display: grid; place-items: center; width: 30px; height: 30px; border-radius: 50%; background: conic-gradient(#f6a04e, #ef5a78, #c76bd8, #4aa3f0, #58d0f0, #8a7be8, #e86aa8, #f6a04e); }

/* browser window */
.window { position: relative; height: 1972px; display: flex; flex-direction: column; border: 2px solid #56565b; border-top-color: #68686c; border-radius: 22px 22px 22px 22px; overflow: hidden; background: #1c1b22; }
.tabbar { height: 86px; display: flex; align-items: center; flex: none; }
.lights { display: flex; gap: 16px; margin-left: 23px; }
.lights i { width: 24px; height: 24px; border-radius: 50%; background: #fb5a53; }
.lights i:nth-child(2) { background: #fbb43c; }
.lights i:nth-child(3) { background: #36c349; }
.firefox-view { margin-left: 107px; }
.tabs { display: flex; gap: 8px; margin-left: 28px; height: 86px; border-left: 2px solid #54545a; align-items: center; padding-left: 6px; }
.tab { width: 442px; height: 72px; padding-left: 18px; display: flex; align-items: center; border-radius: 8px; font-size: 22px; color: #b4b4b9; letter-spacing: -.1px; }
.tab > svg:first-child { width: 32px; margin-right: 12px; }
.tab em { width: 32px; margin-right: 12px; font: 40px/40px "Liberation Serif", serif; color: #f36d21; padding-left: 4px; }
.tab span { width: 338px; overflow: hidden; white-space: nowrap; -webkit-mask-image: linear-gradient(90deg, #000 91%, transparent); mask-image: linear-gradient(90deg, #000 91%, transparent); }
.tab .x { margin-left: 5px; }
.tab.active { background: #4a4954; color: #fbfbfe; box-shadow: 0 1px 5px #0008; }
.newtab { margin-left: 33px; }
.alltabs { margin-left: 1104px; }

.navbar { height: 80px; flex: none; background: #27262c; display: flex; align-items: center; }
.navleft { display: grid; grid-template-columns: 90px 72px 72px 70px 286px; align-items: center; margin-left: 14px; }
.sidebtn { width: 64px; height: 64px; border-radius: 8px; background: #5c5b64; display: grid; place-items: center; }
.dim { color: #74747b; }
.urlbar { width: 2548px; height: 64px; border-radius: 8px; background: #1c1b22; display: flex; align-items: center; padding-left: 18px; }
.urlbar svg:nth-of-type(2) { margin-left: 28px; }
.url { width: 2370px; margin: 2px 6px 0 24px; white-space: nowrap; overflow: hidden; font-size: 27px; letter-spacing: -.11px; line-height: 40px; color: #8f8f96; -webkit-mask-image: linear-gradient(90deg, #000 96.500%, transparent); mask-image: linear-gradient(90deg, #000 96.500%, transparent); }
.u2 { color: #fbfbfe; }
.navright { margin-left: 254px; display: grid; grid-template-columns: 71px 73px 73px 75px 80px 30px; align-items: center; }

.body { flex: 1; display: flex; min-height: 0; }
.rail { width: 97px; background: #27262c; display: flex; flex-direction: column; align-items: center; padding-top: 29px; gap: 37px; border-right: 2px solid #343338; }
.rail svg:nth-child(1), .rail svg:nth-child(2) { margin-left: 2px; }
.rail .gear { margin-top: auto; margin-bottom: 26px; margin-left: 2px; }
.viewer { flex: 1; display: flex; flex-direction: column; min-width: 0; background: #252527; }

/* document toolbar */
.pdfbar { height: 67px; flex: none; display: flex; align-items: center; background: #323236; border-top: 1px solid #3d3d41; border-bottom: 2px solid #0e0e10; color: #bdbdc0; }
.pbtn { width: 56px; height: 56px; border-radius: 4px; display: grid; place-items: center; }
.pbtn.on { background: #222225; }
.pbtn.dark { background: #1e1e20; }
.vsep { width: 2px; height: 34px; background: #232326; }
.vsep.tall { height: 44px; }
.pdfleft { display: grid; grid-template-columns: 193px 44px 18px 43px 124px 80px; align-items: center; margin-left: 2px; width: 1687px; }
.up { transform: scaleY(-1); }
.pagebox { width: 112px; height: 48px; border: 2px solid #6b6b6d; border-radius: 4px; background: #3a3a3c; text-align: right; padding-right: 15px; font-size: 23px; line-height: 46px; color: #fbfbfe; }
.pagecount { font-size: 23.500px; letter-spacing: .3px; padding-top: 1px; color: #fbfbfe; white-space: nowrap; }
.pdfmid { display: grid; grid-template-columns: 43px 19px 43px 280px; align-items: center; width: 1578px; margin-left: -1px; }
.zoom { height: 56px; background: #424247; display: flex; align-items: center; justify-content: space-between; padding: 0 17px 0 13px; font-size: 23px; letter-spacing: .3px; color: #fbfbfe; }
.pdfright { display: grid; grid-template-columns: 46px 72px 57px 59px 49px 21px 56px 51px 22px 28px; align-items: center; margin-left: -1px; }

.content { flex: 1; display: flex; min-height: 0; }
.outline { width: 399px; border-right: 2px solid #1b1b1d; background: #252527; }
.outbar { height: 65px; background: #2d2d2f; border-bottom: 2px solid #1b1b1d; display: grid; grid-template-columns: 42px 77px 53px 141px 19px 34px; align-items: center; padding: 1px 0 0 17px; }
.tree { list-style: none; padding-top: 12px; font-size: 24.500px; letter-spacing: .58px; line-height: 30px; color: #d6d6d8; }
.tree li { margin-bottom: 16px; display: flex; white-space: nowrap; }
.tree li::before { content: ""; width: 16px; height: 11px; margin: 8px 20px 0 0; flex: none; }
.tree li.open::before { background: #fff; clip-path: polygon(0 0, 100% 0, 50% 100%); }
.l0 { padding-left: 20px; } .l1 { padding-left: 60px; } .l2 { padding-left: 100px; } .l3 { padding-left: 140px; }

/* document page */
.page { width: 2856px; margin-left: 229px; background: #fff; color: #000; overflow: hidden; font-family: "Charis SIL", "DejaVu Serif Condensed", "Liberation Serif", serif; }
.zone { font-family: "Charis SIL", "Liberation Serif", serif; fill: #000; }
.zone.light { fill: #fff; }
.caption { margin: 28px 0 0 292px; display: flex; gap: 19px; font-size: 34.800px; line-height: 50px; white-space: nowrap; }
.caption b { letter-spacing: -.15px; }
.caption i, .col i { font-style: italic; }
.caption a { color: #2e8cc9; }
sub { font-size: 76%; line-height: 0; vertical-align: -7px; }
.cols { display: grid; grid-template-columns: 1204px 1204px; column-gap: 87px; margin: 101px 0 0 181px; }
.col p { height: 50.250px; font-size: 38.350px; line-height: 50.250px; text-align: justify; text-align-last: justify; white-space: nowrap; word-spacing: -5px; }
.col p.end { text-align-last: left; word-spacing: 0; }
.col p.indent { padding-left: 57px; }
.col h2 { margin: 50.250px 0; font-size: 38.500px; line-height: 50.250px; }
.col h2 span { margin-right: 23px; }
.ibeam { display: inline-block; width: 3px; height: 42px; background: #333; vertical-align: -10px; margin-left: 10px; margin-right: -10px; }
.scroll { flex: 1; display: flex; justify-content: flex-end; margin-left: 227px; background: #212123; padding: 1375px 5px 0 0; }
.scroll i { width: 14px; height: 54px; border-radius: 7px; background: #737375; }

/* highlight options */
.popup { position: absolute; left: 3012px; top: 237px; width: 444px; height: 383px; background: #3a3944; border: 2px solid #222127; border-radius: 7px; padding: 22px 20px 0 20px; box-shadow: 0 4px 12px #0007; }
.tip { position: absolute; left: 406px; top: -17px; }
.popup h3 { font-size: 25px; font-weight: 400; line-height: 40px; height: 40px; letter-spacing: .25px; }
.swatches { display: flex; justify-content: space-between; align-items: center; height: 64px; margin: 5px 1px 0 1px; padding-right: 0; }
.swatches i { width: 46px; height: 46px; border-radius: 50%; border: 1.500px solid #4d4c58; }
.swatches .sel { border: 1px solid #2c2b34; box-shadow: 0 0 0 5px #3a3944, 0 0 0 9px #9eebff; }
.c1 { background: #ffff98; } .c2 { background: #53ffbc; } .c3 { background: #80ebff; } .c4 { background: #fbc4e4; } .c5 { background: #f94d57; }
.swatches + h3 { margin-top: 25px; }
.slider { display: flex; align-items: center; height: 48px; margin-top: 6px; }
.small { width: 16px; height: 16px; border-radius: 50%; background: #767683; }
.track { position: relative; width: 264px; height: 4px; background: #000; margin: 0 36px; }
.thumb { position: absolute; left: 60px; top: -11px; width: 26px; height: 26px; border-radius: 11px; background: #fff; border: 1.500px solid #8a8a8a; }
.big { width: 48px; height: 48px; border-radius: 50%; background: #767683; }
.popup hr { height: 2px; border: 0; background: #7c7b87; margin: 40px 0 0; }
.showall { display: flex; justify-content: space-between; align-items: center; margin-top: 25px; }
.toggle { width: 64px; height: 32px; border-radius: 16px; background: #36d8fd; display: flex; justify-content: flex-end; padding: 4px; }
.toggle i { width: 24px; height: 24px; border-radius: 50%; background: #1c1b22; }

/* desktop and dock */
.desktop { position: relative; height: 138px; display: flex; justify-content: center; padding-top: 2px; }
.beam { position: absolute; left: 78px; top: 0; width: 12px; height: 138px; background: linear-gradient(#6e2a1c, #f25636 60%, #fb5b3a); box-shadow: 0 0 3px #f2563680; }
.dock { position: relative; width: 1558px; height: 126px; border: 2px solid #3a3a3b; border-radius: 32px; background: #141412; display: flex; align-items: center; gap: 26px; padding-left: 16px; box-shadow: 0 0 45px #0006; }
.app { position: relative; width: 78px; height: 78px; margin-top: -8px; }
.app.run::after { content: ""; position: absolute; left: 35px; top: 95px; width: 8px; height: 8px; border-radius: 50%; background: #8d8d8d; }
.badge { position: absolute; right: -13px; top: -10px; width: 38px; height: 38px; border-radius: 50%; background: #f03b33; text-align: center; font-size: 21px; line-height: 38px; font-weight: 400; }
.dsep { width: 2px; height: 94px; background: #3e3e3f; margin: 0 8px 0 10px; }
.files { margin: -12px 0 0 8px; }
.trash { margin: -12px 0 0 12px; }
```
